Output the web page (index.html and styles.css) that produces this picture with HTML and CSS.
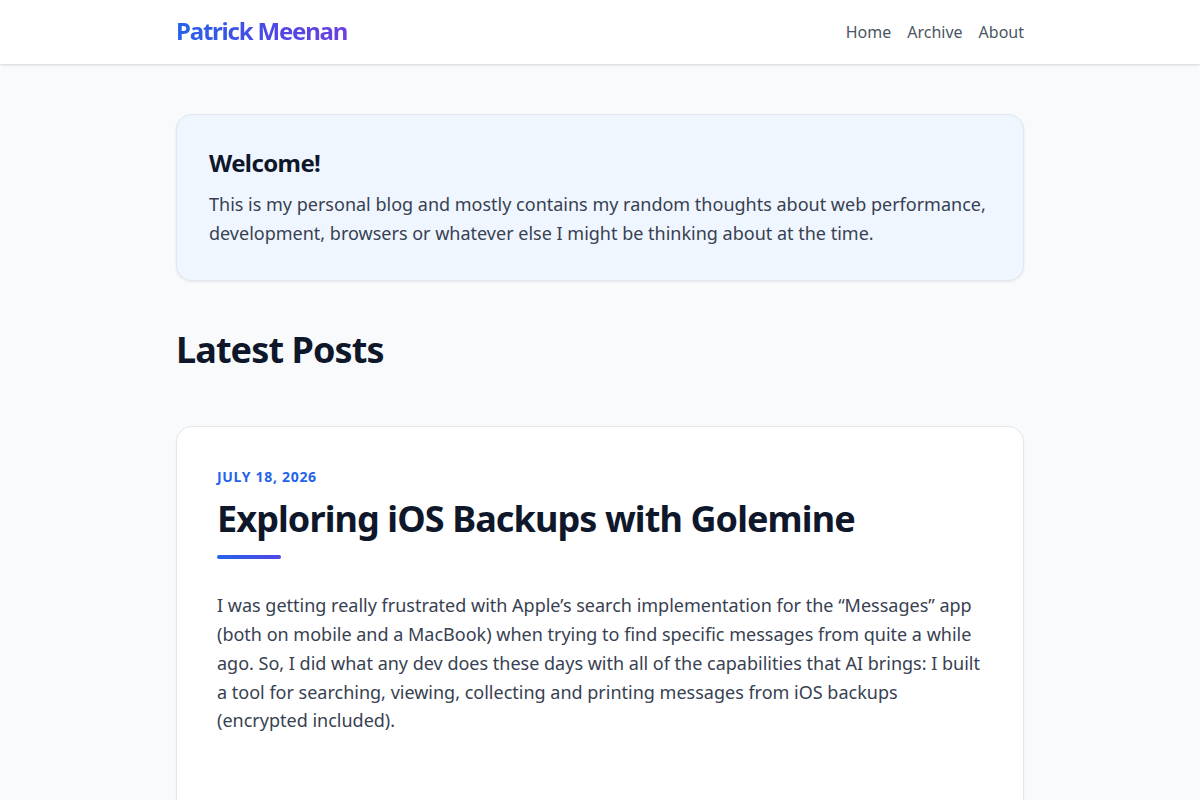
FILE: index.html
```html
<!DOCTYPE html>
<html lang="en">
<head>
<meta charset="utf-8">
<title>Patrick Meenan</title>
<link rel="stylesheet" href="styles.css">
</head>
<body>
<header class="site-header">
  <div class="container header-inner">
    <a class="logo" href="#">Patrick Meenan</a>
    <nav class="nav">
      <a href="#">Home</a>
      <a href="#">Archive</a>
      <a href="#">About</a>
    </nav>
  </div>
</header>
<main class="container main">
  <section class="welcome">
    <h2 class="welcome-title">Welcome!</h2>
    <p class="welcome-text">This is my personal blog and mostly contains my random thoughts about web performance, development, browsers or whatever else I might be thinking about at the time.</p>
  </section>
  <h1 class="section-title">Latest Posts</h1>
  <article class="post">
    <div class="post-date">July 18, 2026</div>
    <h2 class="post-title">Exploring iOS Backups with Golemine</h2>
    <div class="post-bar"></div>
    <p class="post-excerpt">I was getting really frustrated with Apple’s search implementation for the “Messages” app (both on mobile and a MacBook) when trying to find specific messages from quite a while ago. So, I did what any dev does these days with all of the capabilities that AI brings: I built a tool for searching, viewing, collecting and printing messages from iOS backups (encrypted included).</p>
  </article>
</main>
</body>
</html>
```
FILE: styles.css
```css
* { box-sizing: border-box; }
html, body { margin: 0; padding: 0; }
body {
  font-family: "Noto Sans", "Open Sans", sans-serif;
  background: #f8fafc;
  color: #1f2937;
}
a { text-decoration: none; }
.container {
  width: 848px;
  margin: 0 auto;
}
.site-header {
  background: #ffffff;
  height: 64px;
  box-shadow: 0 1px 3px rgba(0,0,0,0.1), 0 1px 2px rgba(0,0,0,0.06);
  position: relative;
}
.header-inner {
  height: 64px;
  display: flex;
  align-items: center;
  justify-content: space-between;
}
.logo {
  font-size: 24px;
  line-height: 1;
  font-weight: 700;
  letter-spacing: -0.05em;
  background: linear-gradient(90deg, #2563eb, #4f46e5 60%, #6d3fe0);
  -webkit-background-clip: text;
  background-clip: text;
  color: transparent;
  padding-bottom: 2px;
}
.nav {
  display: flex;
  gap: 16px;
}
.nav a {
  color: #4b5563;
  font-size: 16px;
}
.main {
  padding-top: 50px;
  padding-bottom: 40px;
}
.welcome {
  background: #eff6ff;
  border: 1px solid #e2e8f0;
  border-radius: 16px;
  padding: 32px;
  box-shadow: 0 1px 3px rgba(0,0,0,0.08);
}
.welcome-title {
  margin: 0 0 12px;
  font-size: 24px;
  line-height: 1.3;
  font-weight: 700;
  letter-spacing: -0.025em;
  color: #0f172a;
}
.welcome-text {
  margin: 0;
  font-size: 18px;
  line-height: 1.6;
  color: #374151;
}
.section-title {
  margin: 47px 0 55px;
  font-size: 36px;
  line-height: 1.2;
  font-weight: 700;
  letter-spacing: -0.025em;
  color: #0f172a;
}
.post {
  background: #ffffff;
  border: 1px solid #e5e7eb;
  border-radius: 16px;
  padding: 41px 40px 40px;
  box-shadow: 0 1px 3px rgba(0,0,0,0.05);
}
.post-date {
  font-size: 14px;
  line-height: 18px;
  font-weight: 700;
  letter-spacing: 0.05em;
  text-transform: uppercase;
  color: #2563eb;
  margin-bottom: 11px;
}
.post-title {
  margin: 0;
  font-size: 36px;
  line-height: 1.2;
  font-weight: 700;
  letter-spacing: -0.025em;
  color: #0f172a;
}
.post-bar {
  width: 64px;
  height: 4px;
  border-radius: 2px;
  margin-top: 15px;
  background: linear-gradient(90deg, #2563eb, #4f46e5);
}
.post-excerpt {
  margin: 32px 0 0;
  font-size: 18px;
  line-height: 1.6;
  color: #374151;
  padding-bottom: 40px;
}
```
